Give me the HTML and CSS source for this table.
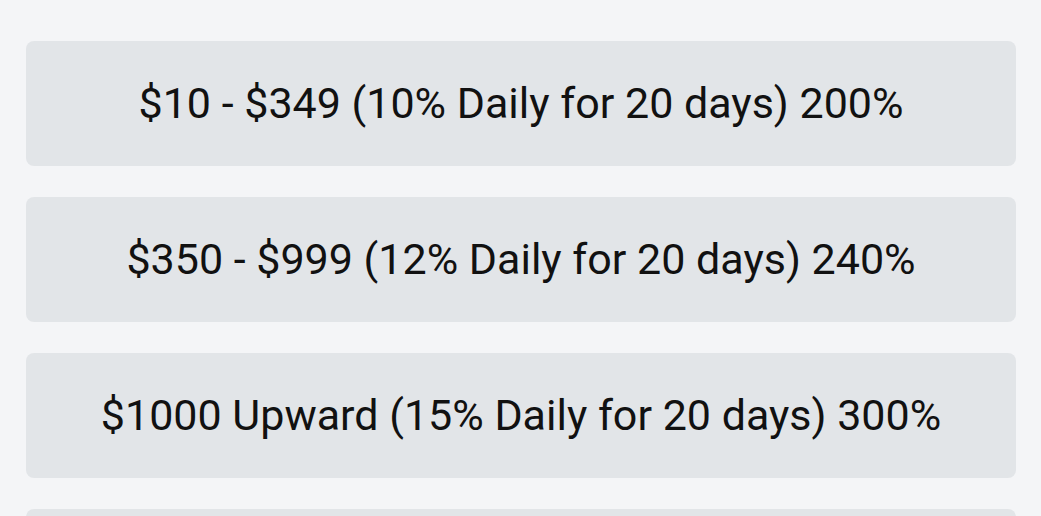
FILE: index.html
```html
<!DOCTYPE html>
<html>
<head>
<meta charset="utf-8">
<link rel="stylesheet" href="styles.css">
</head>
<body>
<div class="plans">
  <div class="plan">$10 - $349 (10% Daily for 20 days) 200%</div>
  <div class="plan">$350 - $999 (12% Daily for 20 days) 240%</div>
  <div class="plan">$1000 Upward (15% Daily for 20 days) 300%</div>
  <div class="plan"></div>
</div>
</body>
</html>
```
FILE: styles.css
```css
html, body {
  margin: 0;
  padding: 0;
  background: #f4f5f7;
  overflow: hidden;
  height: 516px;
}
.plans {
  display: flex;
  flex-direction: column;
  gap: 31px;
  padding: 41px 25px 0 26px;
}
.plan {
  height: 125px;
  flex-shrink: 0;
  display: flex;
  align-items: center;
  justify-content: center;
  background: #e2e5e8;
  border-radius: 8px;
  font-family: Roboto, "Liberation Sans", sans-serif;
  font-size: 43px;
  color: #111;
  letter-spacing: 0;
  line-height: 1;
}
```
